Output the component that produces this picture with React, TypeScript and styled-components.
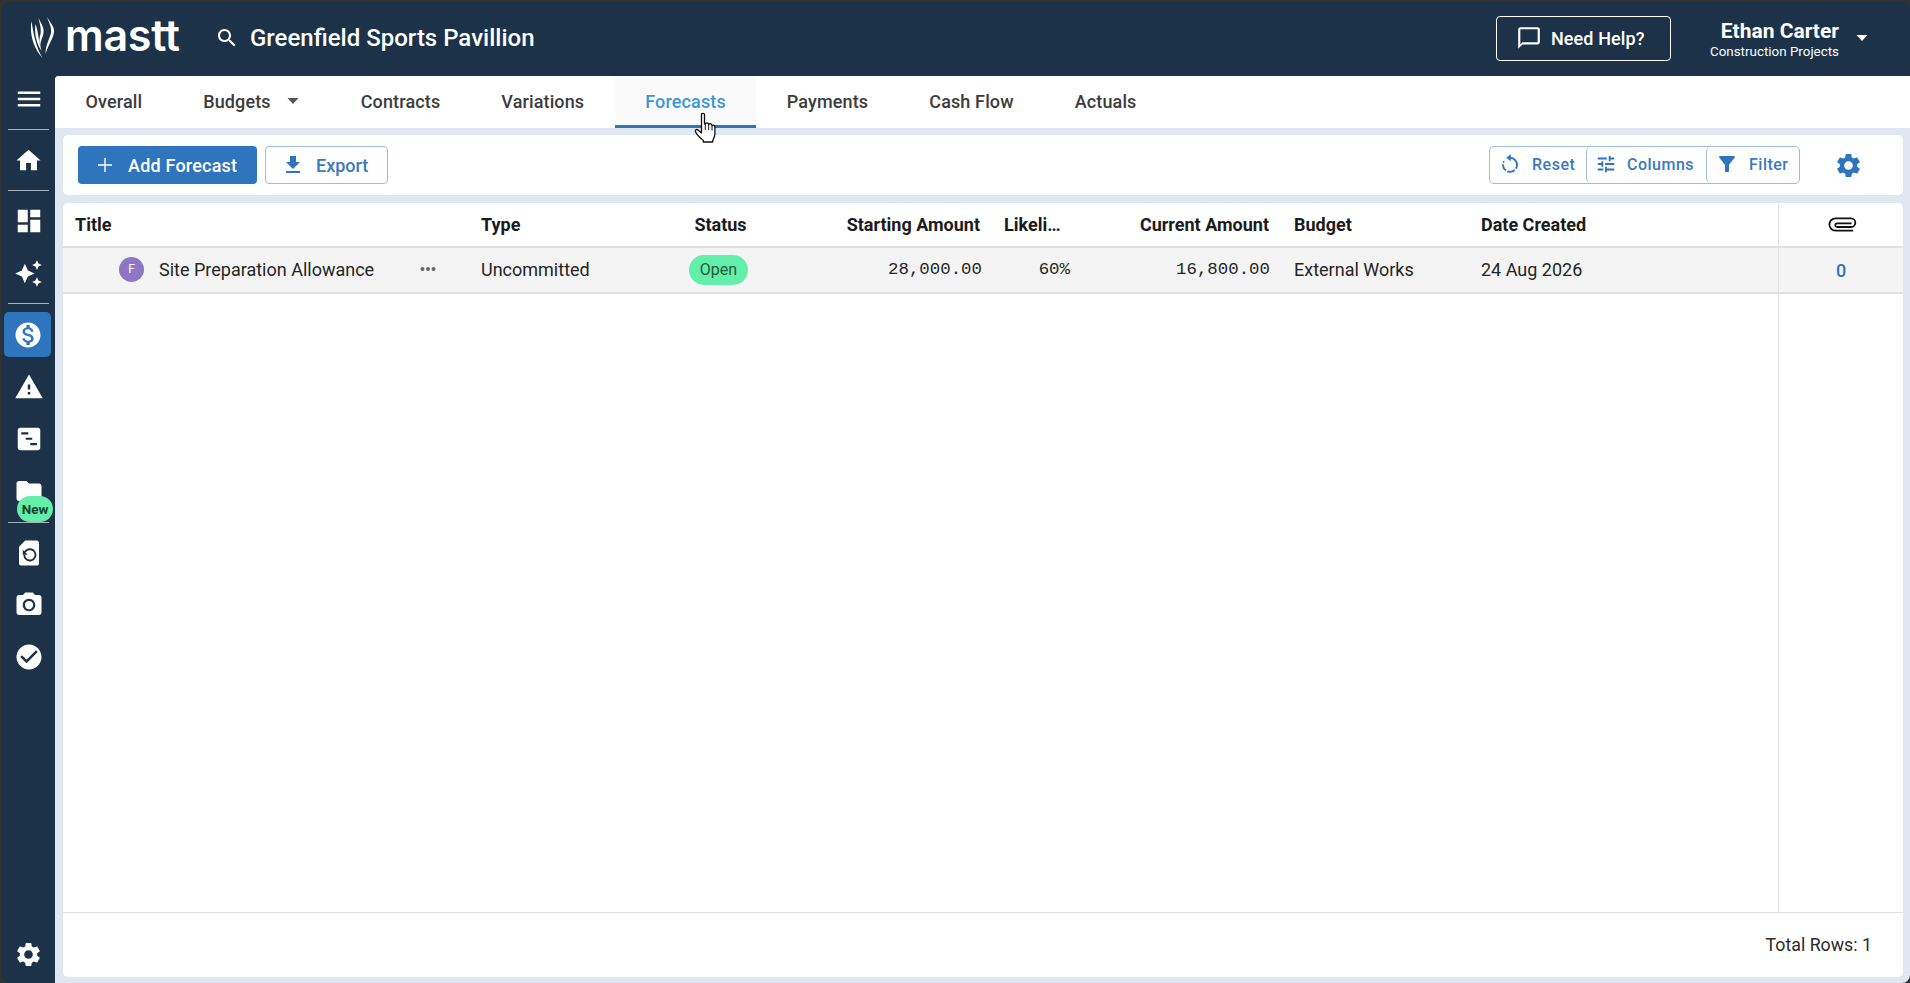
import React from 'react';
import styled, { createGlobalStyle } from 'styled-components';

const GlobalStyle = createGlobalStyle`
  html, body, #root { margin: 0; padding: 0; height: 100%; }
  body { background: #333230; font-family: Roboto, "Liberation Sans", sans-serif; overflow: hidden; }
  * { box-sizing: border-box; }
`;

const NAVY = '#1c3248';
const BLUE = '#2f75bd';
const PAGE = '#dfe7f1';
const LINE = '#e0e0e0';

const Shell = styled.div`
  position: relative;
  height: 983px;
  padding: 2px 0 0 2px;
  display: flex;
`;
const Window = styled.div`
  flex: 1;
  min-width: 0;
  display: flex;
  flex-direction: column;
  background: ${NAVY};
  border-radius: 8px;
  overflow: hidden;
`;
const Header = styled.header`
  height: 74px;
  flex: none;
  display: flex;
  align-items: center;
  color: #fff;
  padding: 0 0 2px 0;
`;
const Logo = styled.div`
  display: flex;
  align-items: center;
  margin-left: 28px;
  width: 180px;
  flex: none;
`;
const LogoText = styled.span`
  font-family: Inter, "Liberation Sans", sans-serif;
  font-weight: 600;
  font-size: 43px;
  line-height: 1;
  letter-spacing: -0.3px;
  margin: -5px 0 0 9px;
`;
const SearchWrap = styled.div`
  display: flex;
  align-items: center;
  gap: 11px;
  margin-left: 5px;
  flex: 1;
`;
const ProjectTitle = styled.span`
  font-size: 24px;
  font-weight: 500;
`;
const HelpButton = styled.button`
  width: 175px;
  height: 45px;
  background: transparent;
  border: 1px solid #fff;
  border-radius: 4px;
  color: #fff;
  font: 500 18px Roboto, sans-serif;
  letter-spacing: 0.1px;
  display: flex;
  align-items: center;
  gap: 9px;
  padding: 0 0 0 19px;
`;
const UserBlock = styled.div`
  width: 168px;
  text-align: right;
  display: flex;
  flex-direction: column;
  align-items: flex-end;
  flex: none;
  padding-top: 4px;
`;
const UserName = styled.div`
  font-size: 21px;
  font-weight: 700;
  line-height: 22px;
  white-space: nowrap;
`;
const UserOrg = styled.div`
  font-size: 13.4px;
  line-height: 19px;
  white-space: nowrap;
`;
const UserCaret = styled.div`
  width: 71px;
  flex: none;
  padding-left: 16px;
  display: flex;
  align-items: center;
`;
const Body = styled.div`
  flex: 1;
  min-height: 0;
  display: flex;
`;
const Sidebar = styled.nav`
  width: 53px;
  flex: none;
  display: flex;
  flex-direction: column;
  align-items: stretch;
  color: #fff;
`;
const NavItem = styled.div<{ $h?: number; $active?: boolean }>`
  position: relative;
  height: ${p => p.$h ?? 52}px;
  flex: none;
  display: flex;
  align-items: center;
  justify-content: center;
  ${p => p.$active ? `background: ${BLUE}; border-radius: 5px; margin: 4px 4px 4px 2px;` : ''}
`;
const NavDivider = styled.div<{ $top?: number }>`
  height: 1px;
  flex: none;
  background: #a9b0b8;
  margin: ${p => p.$top ?? 4}px 6px 4px 6px;
`;
const SidebarFoot = styled.div`
  margin-top: auto;
  height: 43px;
  flex: none;
  display: flex;
  align-items: flex-start;
  justify-content: center;
`;
const NewBadge = styled.span`
  position: absolute;
  left: 15px;
  top: 31px;
  width: 36px;
  height: 26px;
  border-radius: 13px;
  background: #63eeaa;
  color: #17432f;
  font-size: 13.5px;
  font-weight: 700;
  line-height: 26px;
  text-align: center;
`;
const Content = styled.main`
  flex: 1;
  min-width: 0;
  background: ${PAGE};
  display: flex;
  flex-direction: column;
  border-radius: 4px 0 0 0;
`;
const Tabs = styled.div`
  height: 52px;
  flex: none;
  background: #fff;
  display: flex;
  border-radius: 4px 0 0 0;
`;
const Tab = styled.div<{ $active?: boolean }>`
  height: 52px;
  padding: 1px 30.5px 0;
  display: flex;
  align-items: center;
  gap: 15px;
  font-size: 18px;
  letter-spacing: 0.13px;
  font-weight: 500;
  color: ${p => (p.$active ? '#3f95d9' : '#3c3c3c')};
  background: ${p => (p.$active ? '#fafafa' : 'transparent')};
  border-bottom: 3px solid ${p => (p.$active ? BLUE : 'transparent')};
`;
const Toolbar = styled.div`
  height: 60px;
  flex: none;
  margin: 7px 7px 0 8px;
  background: #fff;
  border-radius: 5px;
  display: flex;
  align-items: center;
  padding: 0 40px 0 15px;
`;
const PrimaryButton = styled.button`
  width: 179px;
  height: 38px;
  border: none;
  border-radius: 4px;
  background: ${BLUE};
  color: #fff;
  font: 500 18px Roboto, sans-serif;
  letter-spacing: 0.2px;
  display: flex;
  align-items: center;
  gap: 11px;
  padding: 0 0 0 15px;
`;
const OutlineButton = styled.button`
  width: 123px;
  height: 38px;
  margin-left: 8px;
  border: 1px solid #9dbde0;
  border-radius: 4px;
  background: #fff;
  color: #3b79bf;
  font: 500 18px Roboto, sans-serif;
  display: flex;
  align-items: center;
  gap: 11px;
  padding: 0 0 0 15px;
`;
const ButtonGroup = styled.div`
  margin-left: auto;
  height: 38px;
  display: flex;
  border: 1px solid #9dbde0;
  border-radius: 5px;
`;
const GroupButton = styled.button<{ $w: number; $first?: boolean }>`
  width: ${p => p.$w}px;
  height: 100%;
  border: none;
  border-left: ${p => (p.$first ? 'none' : '1px solid #9dbde0')};
  background: transparent;
  color: #3b79bf;
  font: 500 16px Roboto, sans-serif;
  letter-spacing: 0.5px;
  display: flex;
  align-items: center;
  gap: 10px;
  padding: 0 0 2px 8px;
  border-radius: 5px;
`;
const GearSlot = styled.div`
  margin-left: 33px;
  width: 30px;
  display: flex;
  justify-content: center;
  color: ${BLUE};
`;
const TableCard = styled.section`
  flex: 1;
  min-height: 0;
  margin: 8px 7px 6px 8px;
  background: #fff;
  border-radius: 5px;
  display: flex;
  flex-direction: column;
  overflow: hidden;
`;
const TableArea = styled.div`
  flex: 1;
  min-height: 0;
  display: flex;
  border-bottom: 1px solid ${LINE};
`;
const MainPane = styled.div`
  flex: 1;
  min-width: 0;
`;
const SidePane = styled.div`
  width: 125px;
  flex: none;
  border-left: 1px solid ${LINE};
  text-align: center;
`;
const gridCols = '406px 208px 87px 228px 90px 199px 188px 1fr';
const HeadRow = styled.div`
  height: 45px;
  display: grid;
  grid-template-columns: ${gridCols};
  align-items: center;
  border-bottom: 2px solid ${LINE};
  font-size: 18px;
  font-weight: 700;
  color: #1b1b1b;
`;
const DataRow = styled.div`
  height: 46px;
  padding-bottom: 2px;
  display: grid;
  grid-template-columns: ${gridCols};
  align-items: center;
  background: #f4f4f4;
  border-bottom: 2px solid ${LINE};
  font-size: 18px;
  color: #252525;
`;
const Cell = styled.div<{ $align?: 'left' | 'right' | 'center'; $mono?: boolean; $left?: number; $right?: number }>`
  padding: 0 ${p => p.$right ?? 12}px 0 ${p => p.$left ?? 12}px;
  min-width: 0;
  white-space: nowrap;
  text-align: ${p => p.$align ?? 'left'};
  ${p => p.$mono ? 'font-family: "Liberation Mono", monospace; font-size: 17.4px;' : ''}
`;
const TruncHead = styled.div`
  width: 58px;
  overflow: hidden;
  text-overflow: ellipsis;
`;
const TitleCell = styled.div`
  display: flex;
  align-items: center;
  padding-left: 56px;
`;
const Avatar = styled.span`
  width: 25px;
  height: 25px;
  border-radius: 50%;
  background: #8d76c6;
  color: #fff;
  font-size: 12px;
  display: flex;
  align-items: center;
  justify-content: center;
  flex: none;
`;
const TitleText = styled.span`
  margin-left: 15px;
  width: 260px;
  white-space: nowrap;
`;
const Dots = styled.span`
  color: #666;
  display: flex;
`;
const Pill = styled.span`
  display: block;
  width: 59px;
  height: 30px;
  margin-bottom: -2px;
  border-radius: 15px;
  background: #63eeaa;
  color: #215a40;
  font-size: 16px;
  line-height: 30px;
  text-align: center;
`;
const SideHead = styled.div`
  height: 45px;
  display: flex;
  align-items: center;
  justify-content: center;
  border-bottom: 2px solid ${LINE};
  color: #1b1b1b;
  padding-left: 3px;
`;
const SideCell = styled.div`
  height: 46px;
  display: flex;
  align-items: center;
  justify-content: center;
  background: #f4f4f4;
  border-bottom: 2px solid ${LINE};
  color: ${BLUE};
  font-size: 18px;
  font-weight: 500;
`;
const Footer = styled.footer`
  height: 64px;
  flex: none;
  display: flex;
  align-items: center;
  justify-content: flex-end;
  padding: 0 31px 2px 0;
  font-size: 17.8px;
  color: #2a2a2a;
`;
const CursorLayer = styled.div`
  position: absolute;
  left: 694px;
  top: 112px;
  width: 24px;
  height: 32px;
  pointer-events: none;
`;

const P = {
  menu: 'M3 18h18v-2H3v2zm0-5h18v-2H3v2zm0-7v2h18V6H3z',
  home: 'M10 20v-6h4v6h5v-8h3L12 3 2 12h3v8z',
  dash: 'M3 13h8V3H3v10zm0 8h8v-6H3v6zm10 0h8V11h-8v10zm0-18v6h8V3h-8z',
  spark: 'M19 9l1.25-2.75L23 5l-2.75-1.25L19 1l-1.25 2.75L15 5l2.75 1.25L19 9zm-7.5.5L9 4 6.5 9.5 1 12l5.5 2.5L9 20l2.5-5.5L17 12l-5.5-2.5zM19 15l-1.25 2.75L15 19l2.75 1.25L19 23l1.25-2.75L23 19l-2.75-1.25L19 15z',
  money: 'M12 2C6.48 2 2 6.48 2 12s4.48 10 10 10 10-4.48 10-10S17.52 2 12 2zm1.41 16.09V20h-2.67v-1.93c-1.71-.36-3.16-1.46-3.27-3.4h1.96c.1 1.05.82 1.87 2.65 1.87 1.96 0 2.4-.98 2.4-1.59 0-.83-.44-1.61-2.67-2.14-2.48-.6-4.18-1.62-4.18-3.67 0-1.72 1.39-2.84 3.11-3.21V4h2.67v1.95c1.86.45 2.79 1.86 2.85 3.39H14.3c-.05-1.11-.64-1.87-2.22-1.87-1.5 0-2.4.68-2.4 1.64 0 .84.65 1.39 2.67 1.91s4.18 1.39 4.18 3.91c-.01 1.83-1.38 2.83-3.12 3.16z',
  warn: 'M1 21h22L12 2 1 21zm12-3h-2v-2h2v2zm0-4h-2v-4h2v4z',
  folder: 'M10 4H4c-1.1 0-1.99.9-1.99 2L2 18c0 1.1.9 2 2 2h16c1.1 0 2-.9 2-2V8c0-1.1-.9-2-2-2h-8l-2-2z',
  check: 'M12 2C6.48 2 2 6.48 2 12s4.48 10 10 10 10-4.48 10-10S17.52 2 12 2zm-2 15l-5-5 1.41-1.41L10 14.17l7.59-7.59L19 8l-9 9z',
  camera: 'M9 2L7.17 4H4c-1.1 0-2 .9-2 2v12c0 1.1.9 2 2 2h16c1.1 0 2-.9 2-2V6c0-1.1-.9-2-2-2h-3.17L15 2H9zm3 15c-2.76 0-5-2.24-5-5s2.24-5 5-5 5 2.24 5 5-2.24 5-5 5z',
  gear: 'M19.14 12.94c.04-.3.06-.61.06-.94 0-.32-.02-.64-.07-.94l2.03-1.58c.18-.14.23-.41.12-.61l-1.92-3.32c-.12-.22-.37-.29-.59-.22l-2.39.96c-.5-.38-1.03-.7-1.62-.94l-.36-2.54c-.04-.24-.24-.41-.48-.41h-3.84c-.24 0-.43.17-.47.41l-.36 2.54c-.59.24-1.13.57-1.62.94l-2.39-.96c-.22-.08-.47 0-.59.22L2.74 8.87c-.12.21-.08.47.12.61l2.03 1.58c-.05.3-.09.63-.09.94s.02.64.07.94l-2.03 1.58c-.18.14-.23.41-.12.61l1.92 3.32c.12.22.37.29.59.22l2.39-.96c.5.38 1.03.7 1.62.94l.36 2.54c.05.24.24.41.48.41h3.84c.24 0 .44-.17.47-.41l.36-2.54c.59-.24 1.13-.56 1.62-.94l2.39.96c.22.08.47 0 .59-.22l1.92-3.32c.12-.22.07-.47-.12-.61l-2.01-1.58zM12 15.6c-1.98 0-3.6-1.62-3.6-3.6s1.62-3.6 3.6-3.6 3.6 1.62 3.6 3.6-1.62 3.6-3.6 3.6z',
  search: 'M15.5 14h-.79l-.28-.27C15.41 12.59 16 11.11 16 9.5 16 5.91 13.09 3 9.5 3S3 5.91 3 9.5 5.91 16 9.5 16c1.61 0 3.09-.59 4.23-1.57l.27.28v.79l5 4.99L20.49 19l-4.99-5zm-6 0C7.01 14 5 11.99 5 9.5S7.01 5 9.5 5 14 7.01 14 9.5 11.99 14 9.5 14z',
  chat: 'M20 2H4c-1.1 0-2 .9-2 2v18l4-4h14c1.1 0 2-.9 2-2V4c0-1.1-.9-2-2-2zm0 14H6l-2 2V4h16v12z',
  add: 'M19 12.7h-6.3V19h-1.4v-6.3H5v-1.4h6.3V5h1.4v6.3H19z',
  download: 'M5 20h14v-2H5v2zM19 9h-4V3H9v6H5l7 7 7-7z',
  tune: 'M3 17v2h6v-2H3zM3 5v2h10V5H3zm10 16v-2h8v-2h-8v-2h-2v6h2zM7 9v2H3v2h4v2h2V9H7zm14 4v-2H11v2h10zm-6-4h2V7h4V5h-4V3h-2v6z',
  filter: 'M4.25 5.61C6.27 8.2 10 13 10 13v6c0 .55.45 1 1 1h2c.55 0 1-.45 1-1v-6s3.72-4.8 5.74-7.39c.51-.66.04-1.61-.79-1.61H5.04c-.83 0-1.3.95-.79 1.61z',
};

const Icon = ({ d, size = 24, color = 'currentColor' }: { d: string; size?: number; color?: string }) => (
  <svg width={size} height={size} viewBox="0 0 24 24" fill={color} style={{ flex: 'none', display: 'block' }}>
    <path d={d} />
  </svg>
);

const Caret = ({ color }: { color: string }) => (
  <svg width="14" height="8" viewBox="0 0 14 8" style={{ flex: 'none', display: 'block' }}>
    <path d="M1.500 1h11L7 7z" fill={color} />
  </svg>
);

const ResetIcon = () => (
  <svg width="24" height="24" viewBox="0 0 24 24" style={{ flex: 'none', display: 'block' }}>
    <path
      d="M12 5.800a7 7 0 1 1-6.100 3.600"
      fill="none"
      stroke={BLUE}
      strokeWidth="1.900"
      strokeDasharray="15 1.600 8 1.600 7 1.600 20"
    />
    <path d="M12.800 2.200v7L8.300 5.700z" fill={BLUE} />
  </svg>
);

const ClipIcon = () => (
  <svg width="30" height="15" viewBox="0 0 28 14" style={{ display: 'block' }}>
    <path
      d="M23.500 12.700H7a5.700 5.700 0 0 1 0-11.400h14.500a4 4 0 0 1 0 8H8.500a1.700 1.700 0 0 1 0-3.400h13.500"
      fill="none"
      stroke="#111"
      strokeWidth="1.700"
    />
  </svg>
);

const Gantt = () => (
  <svg width="30" height="30" viewBox="0 0 24 24" style={{ display: 'block' }}>
    <path fill="#fff" d="M5 3h14c1.100 0 2 .9 2 2v14c0 1.100-.9 2-2 2H5c-1.100 0-2-.9-2-2V5c0-1.100.9-2 2-2z" />
    <path fill={NAVY} d="M5.800 6.600h5.600v1.700H5.800zM9.400 10.900h5.200v1.700H9.400zM13 15.200h5.400v1.700H13z" />
  </svg>
);

const DocRestore = () => (
  <svg width="30" height="30" viewBox="0 0 24 24" style={{ display: 'block' }}>
    <path fill="#fff" d="M9 2h9.100C19.200 2 20 2.800 20 3.900v16.200c0 1.100-.8 1.900-1.900 1.900H5.900C4.800 22 4 21.200 4 20.100V7z" />
    <path fill="none" stroke={NAVY} strokeWidth="1.500" d="M8.200 13.400a4.500 4.500 0 1 0 1.400-3.200l-1.600 1.500" />
    <path fill={NAVY} d="M7 9.400v4h4z" />
  </svg>
);

const CameraIcon = () => (
  <svg width="30" height="30" viewBox="0 0 24 24" style={{ display: 'block' }}>
    <path fill="#fff" d={P.camera} />
    <circle cx="12" cy="12" r="3.300" fill="#fff" />
  </svg>
);

const MastMark = () => (
  <svg width="26" height="42" viewBox="0 0 25 42" fill="#fff" style={{ flex: 'none', display: 'block' }}>
    <path d="M1 4C-1 16 2 30 12 41 6 31 3 18 1 4z" />
    <path d="M5 7C4 15 5 25 11 34 8 24 8 15 5 7z" />
    <path d="M8 1c2 5 6 9 5 15-.5 5-4 8-3 16-2-7-1-11 0-15C11 11 9 6 8 1z" />
    <path d="M16.500 0C19 5 24 9 23.500 15 23 21 18 27 15 37c0-9 4-15 5.500-21C21.500 10 18 5 16.500 0z" />
  </svg>
);

const HandCursor = () => (
  <svg width="24" height="32" viewBox="0 0 24 32">
    <path
      d="M7.500 2.500c0-1.600 3-1.600 3 0v9.300l.8.100c.2-1.400 2.900-1.400 3.100.1l.3.6c.3-1.300 2.800-1.200 3 .4l.3.7c.5-1.100 2.800-.8 2.900 1v7.300c0 3-1.600 5-2.200 6.500v1.500H9.300v-1.500C7.500 27 2.500 22 1.500 19.700c-.7-1.600.9-2.900 2.500-1.700l3.500 2.900z"
      fill="#fff"
      stroke="#111"
      strokeWidth="1.300"
      strokeLinejoin="round"
    />
    <path d="M11.300 12v6M14.700 12.700v5.500M18 14v4.500" stroke="#111" strokeWidth="1" fill="none" />
  </svg>
);

const tabNames = ['Contracts', 'Variations'];
const tabNamesAfter = ['Payments', 'Cash Flow', 'Actuals'];

export default function App() {
  return (
    <Shell>
      <GlobalStyle />
      <Window>
        <Header>
          <Logo>
            <MastMark />
            <LogoText>mastt</LogoText>
          </Logo>
          <SearchWrap>
            <Icon d={P.search} size={24} />
            <ProjectTitle>Greenfield Sports Pavillion</ProjectTitle>
          </SearchWrap>
          <HelpButton>
            <Icon d={P.chat} size={26} />
            Need Help?
          </HelpButton>
          <UserBlock>
            <UserName>Ethan Carter</UserName>
            <UserOrg>Construction Projects</UserOrg>
          </UserBlock>
          <UserCaret>
            <Caret color="#fff" />
          </UserCaret>
        </Header>
        <Body>
          <Sidebar>
            <NavItem $h={46}><Icon d={P.menu} size={30} /></NavItem>
            <NavDivider $top={7} />
            <NavItem><Icon d={P.home} size={29} /></NavItem>
            <NavDivider />
            <NavItem><Icon d={P.dash} size={30} /></NavItem>
            <NavItem><Icon d={P.spark} size={29} /></NavItem>
            <NavDivider />
            <NavItem $active $h={45}><Icon d={P.money} size={30} /></NavItem>
            <NavItem><Icon d={P.warn} size={30} /></NavItem>
            <NavItem><Gantt /></NavItem>
            <NavItem>
              <Icon d={P.folder} size={30} />
              <NewBadge>New</NewBadge>
            </NavItem>
            <NavDivider $top={5} />
            <NavItem><DocRestore /></NavItem>
            <NavItem><CameraIcon /></NavItem>
            <NavItem><Icon d={P.check} size={30} /></NavItem>
            <SidebarFoot><Icon d={P.gear} size={29} /></SidebarFoot>
          </Sidebar>
          <Content>
            <Tabs>
              <Tab>Overall</Tab>
              <Tab>Budgets <Caret color="#555" /></Tab>
              {tabNames.map(t => <Tab key={t}>{t}</Tab>)}
              <Tab $active>Forecasts</Tab>
              {tabNamesAfter.map(t => <Tab key={t}>{t}</Tab>)}
            </Tabs>
            <Toolbar>
              <PrimaryButton><Icon d={P.add} size={24} />Add Forecast</PrimaryButton>
              <OutlineButton><Icon d={P.download} size={24} color={BLUE} />Export</OutlineButton>
              <ButtonGroup>
                <GroupButton $first $w={96}><ResetIcon />Reset</GroupButton>
                <GroupButton $w={120}><Icon d={P.tune} size={22} color={BLUE} />Columns</GroupButton>
                <GroupButton $w={93}><Icon d={P.filter} size={24} color={BLUE} />Filter</GroupButton>
              </ButtonGroup>
              <GearSlot><Icon d={P.gear} size={29} /></GearSlot>
            </Toolbar>
            <TableCard>
              <TableArea>
                <MainPane>
                  <HeadRow>
                    <Cell>Title</Cell>
                    <Cell>Type</Cell>
                    <Cell $align="center">Status</Cell>
                    <Cell $align="right">Starting Amount</Cell>
                    <Cell><TruncHead>Likelihood</TruncHead></Cell>
                    <Cell $align="right">Current Amount</Cell>
                    <Cell $left={13}>Budget</Cell>
                    <Cell>Date Created</Cell>
                  </HeadRow>
                  <DataRow>
                    <TitleCell>
                      <Avatar>F</Avatar>
                      <TitleText>Site Preparation Allowance</TitleText>
                      <Dots>
                        <svg width="18" height="6" viewBox="0 0 18 6" fill="#666">
                          <circle cx="3.500" cy="3" r="2" />
                          <circle cx="9" cy="3" r="2" />
                          <circle cx="14.500" cy="3" r="2" />
                        </svg>
                      </Dots>
                    </TitleCell>
                    <Cell>Uncommitted</Cell>
                    <Cell><Pill>Open</Pill></Cell>
                    <Cell $align="right" $mono $right={10}>28,000.00</Cell>
                    <Cell $align="right" $mono>60%</Cell>
                    <Cell $align="right" $mono $right={11}>16,800.00</Cell>
                    <Cell $left={13}>External Works</Cell>
                    <Cell>24 Aug 2026</Cell>
                  </DataRow>
                </MainPane>
                <SidePane>
                  <SideHead><ClipIcon /></SideHead>
                  <SideCell>0</SideCell>
                </SidePane>
              </TableArea>
              <Footer>Total Rows: 1</Footer>
            </TableCard>
          </Content>
        </Body>
      </Window>
      <CursorLayer><HandCursor /></CursorLayer>
    </Shell>
  );
}
